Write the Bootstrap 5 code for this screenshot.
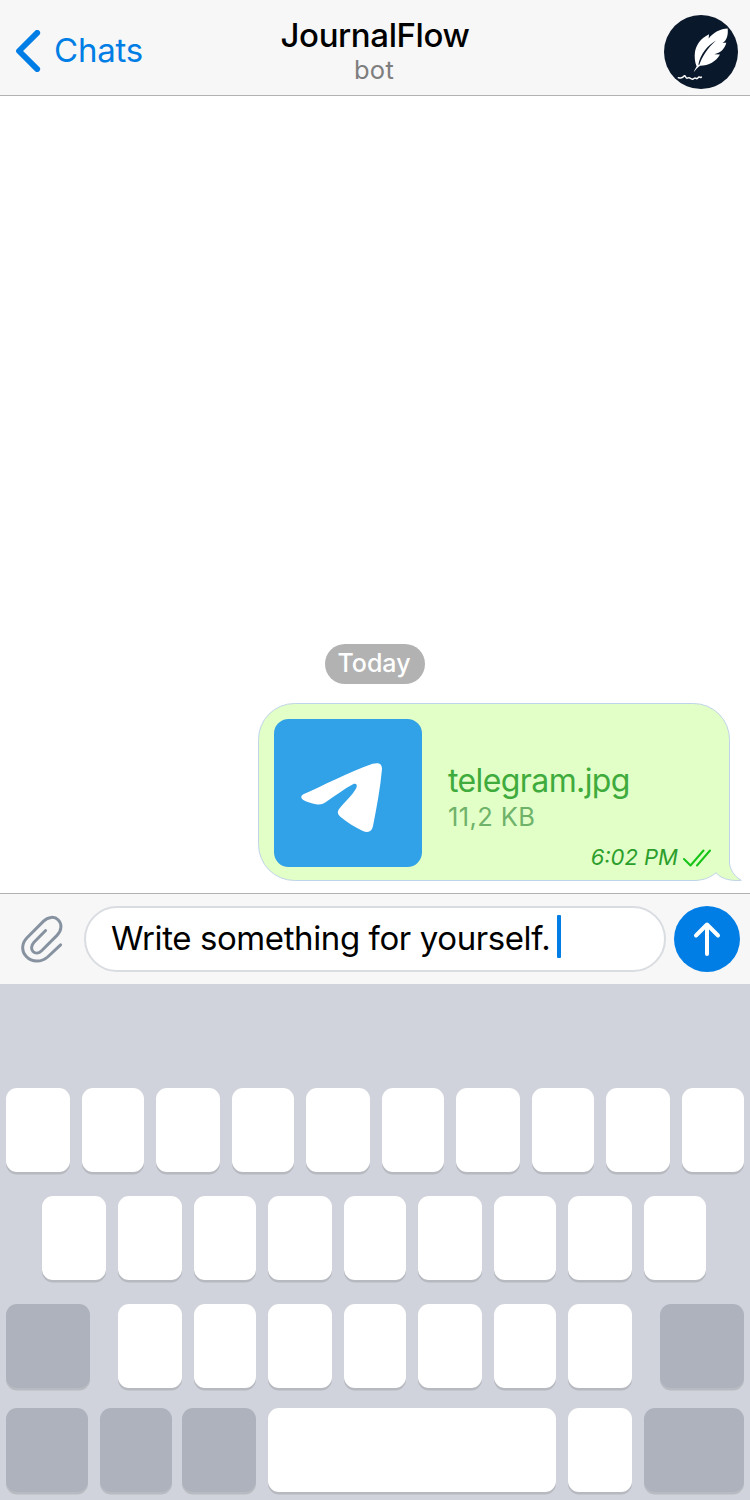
<!DOCTYPE html>
<html lang="en">
<head>
<meta charset="utf-8">
<meta name="viewport" content="width=device-width, initial-scale=1">
<title>JournalFlow</title>
<link href="https://cdn.jsdelivr.net/npm/bootstrap@5.3.0/dist/css/bootstrap.min.css" rel="stylesheet">
<style>
  body { font-family: Inter, "Liberation Sans", sans-serif; width: 750px; height: 1500px; overflow: hidden; background: #fff; color: #000; }
  svg { display: block; flex: none; }
  .topbar { height: 96px; background: #f7f7f7; border-bottom: 1px solid #b2b2b2; display: grid; grid-template-columns: minmax(0, 1fr) auto minmax(0, 1fr); padding: 0 12px; }
  .back { color: #007ee5; font-size: 33px; line-height: 40px; letter-spacing: -.2px; gap: 13px; padding: 30px 0 0 4px; }
  .title { font-size: 33px; font-weight: 500; line-height: 40px; letter-spacing: -.4px; padding-top: 15px; }
  .subtitle { font-size: 25.5px; line-height: 30px; color: #7e7e7e; letter-spacing: .3px; padding-right: 2px; }
  .avatar { margin-top: 15px; }
  .chat { height: 797px; padding: 0 8px 12px; }
  .day { width: 100px; height: 40px; border-radius: 20px; background: #b2b2b2; color: #fff; font-size: 25px; font-weight: 500; line-height: 39px; padding-right: 2px; margin-bottom: 19px; }
  .bubble { width: 484px; height: 178px; padding: 16px; }
  .bubble > .shape { top: 0; left: 0; }
  .file { padding: 44px 0 0 26px; }
  .fname { color: #3fab3c; font-size: 32px; line-height: 36px; letter-spacing: -.6px; }
  .fsize { color: #6fb26a; font-size: 25.5px; line-height: 36px; letter-spacing: .4px; }
  .stamp { right: 31px; bottom: 9px; gap: 5px; color: #2c9e2c; font-size: 22px; line-height: 28px; font-style: italic; }
  .stamp span { padding-bottom: 1px; }
  .composer { height: 91px; background: #f7f7f7; border-top: 1px solid #b2b2b2; padding: 0 10px 0 20px; }
  .entry { width: 582px; height: 66px; border: 2px solid #d9dce0; border-radius: 33px; background: #fff; padding: 0 0 1px 25px; margin: 0 8px 0 20px; font-size: 33px; letter-spacing: -.4px; }
  .caret { width: 4px; height: 43px; border-radius: 1px; background: #007ee5; margin: -4px 0 0 7px; }
  .keyboard { height: 516px; background: #d0d3db; padding: 104px 6px 0; }
  .keyrow { height: 84px; margin-bottom: 24px; gap: 12px; }
  .keyrow.inset { padding-left: 36px; }
  .keyrow.low { margin-bottom: 20px; }
  .keycap { width: 64px; border-radius: 11px; background: #fff; box-shadow: 0 2.5px 0 #b6b9bf; }
  .k62 { width: 62px; }
  .fn { background: #aeb2bd; box-shadow: 0 2.5px 0 #b8bbc1; }
  .shift { width: 84px; }
  .mode { width: 82px; } .globe { width: 72px; } .mic { width: 74px; margin-left: -2px; }
  .space { width: 288px; } .enter { width: 100px; }
</style>
</head>
<body>
<header class="topbar">
  <div class="back d-flex align-items-start">
    <svg width="25" height="42" viewBox="0 0 25 42" fill="none" stroke="#007ee5" stroke-width="5.8" stroke-linecap="round" stroke-linejoin="round"><path d="M21.2 2.9 3 21l18.2 18.1"/></svg>
    <span>Chats</span>
  </div>
  <div class="text-center">
    <div class="title">JournalFlow</div>
    <div class="subtitle">bot</div>
  </div>
  <svg class="avatar ms-auto" width="74" height="74" viewBox="42 44.5 222 222">
    <circle cx="153" cy="155.5" r="111" fill="#0a182b"/>
    <path fill="#fff" d="M131 216C133 210 137 204 140 199C134 186 133 168 135 155C138 135 152 114 177 102L176 115C190 97 211 86 233 85C235 104 231 122 217 128L229 128C224 147 211 159 193 162L210 163C198 184 177 196 150 197C142 202 137 210 131 216Z"/>
    <path fill="#0a182b" d="M198 121C174 135 151 160 145 194L148 194C154 174 172 144 198 121Z"/>
    <path d="M85 233C92 233 96 235 100 230S105 226 108 232S115 230 119 233S126 240 132 235S139 240 144 233S149 235 154 231" fill="none" stroke="#fff" stroke-width="4.5" stroke-linecap="round"/>
  </svg>
</header>

<main class="chat d-flex flex-column justify-content-end">
  <div class="day text-center align-self-center">Today</div>
  <div class="bubble position-relative d-flex align-self-end">
    <svg class="shape position-absolute" width="484" height="178" viewBox="0 0 484 178"><path fill="#e1ffc7" stroke="#bfd4e8" d="M36.5 .5H435.5A36 36 0 0 1 471.5 36.5V160C472 167 477 174 483.3 177.3C475 178 464 177 458 169.7C452 175 444 177.5 436 177.5H36.5A36 36 0 0 1 .5 141.5V36.5A36 36 0 0 1 36.5 .5Z"/></svg>
    <svg class="position-relative" width="148" height="148" viewBox="0 0 444 444">
      <rect width="444" height="444" rx="44" fill="#31a2e7"/>
      <path fill="#fff" d="M88 226C145 200 226 159 296 134C314 130 324 133 324 150C319 208 308 266 297 321C293 339 282 343 265 335C242 324 219 309 199 293C189 285 190 277 197 268C213 248 236 228 247 207C251 197 246 192 237 196C210 210 185 230 159 247C147 256 140 258 126 256C112 253 99 249 88 243C80 238 80 231 88 226Z"/>
    </svg>
    <div class="file position-relative">
      <div class="fname">telegram.jpg</div>
      <div class="fsize">11,2 KB</div>
    </div>
    <div class="stamp position-absolute d-flex align-items-center">
      <span>6:02 PM</span>
      <svg width="28" height="18" viewBox="0 0 28 18" fill="none" stroke="#18c418" stroke-width="2" stroke-linecap="round" stroke-linejoin="round"><path d="M1 10 7.5 16.5 20.5 1.5M14 16.5 27 1.5"/></svg>
    </div>
  </div>
</main>

<div class="composer d-flex align-items-center">
  <svg width="44" height="50" viewBox="0 0 44 50" fill="none" stroke="#8792a0" stroke-width="3" stroke-linecap="round" stroke-linejoin="round"><path d="M25.6 16.5 14 28.2C10.7 31.7 11.2 35.6 13 37.5C15.3 39.8 18.8 39.6 21.6 36.8L37 21.4C42.2 16.2 41.8 9.5 38.3 6C34.4 2 28 2.7 23.6 7.1L7 23.7C1.5 29.5 1.2 37 6.3 42.5C12 48.6 21.5 48.4 27.6 43L40.6 30.8"/></svg>
  <div class="entry d-flex align-items-center"><span>Write something for yourself.</span><span class="caret"></span></div>
  <svg width="66" height="66" viewBox="0 0 66 66"><circle cx="33" cy="33" r="33" fill="#007ee5"/><path d="M33 48V19M22 29.5 33 18.5 44 29.5" fill="none" stroke="#fff" stroke-width="4" stroke-linecap="round" stroke-linejoin="round"/></svg>
</div>

<div class="keyboard">
  <div class="keyrow d-flex">
    <div class="keycap"></div><div class="keycap k62"></div><div class="keycap"></div><div class="keycap k62"></div><div class="keycap"></div><div class="keycap k62"></div><div class="keycap"></div><div class="keycap k62"></div><div class="keycap"></div><div class="keycap k62"></div>
  </div>
  <div class="keyrow inset d-flex">
    <div class="keycap"></div><div class="keycap"></div><div class="keycap k62"></div><div class="keycap"></div><div class="keycap k62"></div><div class="keycap"></div><div class="keycap k62"></div><div class="keycap"></div><div class="keycap k62"></div>
  </div>
  <div class="keyrow low d-flex justify-content-between">
    <div class="keycap fn shift"></div>
    <div class="keyrow d-flex">
      <div class="keycap"></div><div class="keycap k62"></div><div class="keycap"></div><div class="keycap k62"></div><div class="keycap"></div><div class="keycap k62"></div><div class="keycap"></div>
    </div>
    <div class="keycap fn shift"></div>
  </div>
  <div class="keyrow d-flex">
    <div class="keycap fn mode"></div><div class="keycap fn globe"></div><div class="keycap fn mic"></div><div class="keycap space"></div><div class="keycap"></div><div class="keycap fn enter"></div>
  </div>
</div>
<script src="https://cdn.jsdelivr.net/npm/bootstrap@5.3.0/dist/js/bootstrap.bundle.min.js"></script>
</body>
</html>
